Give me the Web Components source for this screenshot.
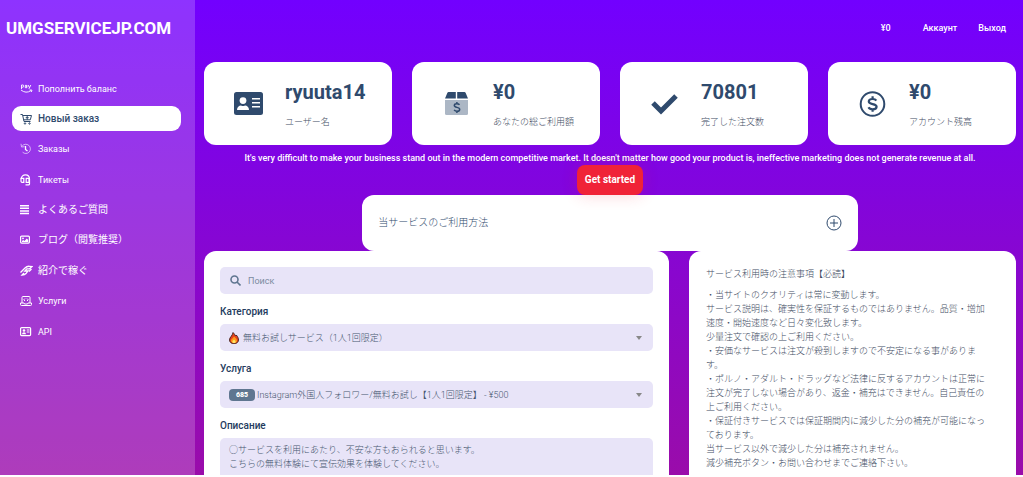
<!DOCTYPE html>
<html lang="ru">
<head>
<meta charset="utf-8">
<meta name="viewport" content="width=device-width, initial-scale=1">
<title>umgservicejp.com</title>
<style>
  body { margin: 0; background: #fff; color: #2f4a6d; font: 9px/14px Roboto, "Noto Sans CJK JP", sans-serif; overflow: hidden; }
</style>
</head>
<body>
<smm-app></smm-app>

<template id="t-app">
  <style>
    :host { display: flex; height: calc(100vh - 2px); overflow: hidden; background: linear-gradient(#7200ff, #9a0caa); }
    main { flex: 1; min-width: 0; padding: 0 7px 0 9px; }
    .stats { display: grid; grid-template-columns: repeat(4, 1fr); gap: 20px; }
    .promo { display: flex; flex-direction: column; align-items: center; padding-top: 6px; color: #fff; }
    .promo p { margin: 0; font-weight: 500; text-align: center; }
    .promo button { height: 30px; padding: 0 8px; border: 0; border-radius: 8px; background: #f02337; color: #fff; font: 700 10px/14px Roboto, sans-serif; box-shadow: 0 0 16px rgba(240, 35, 55, .2); }
    .columns { display: grid; grid-template-columns: 465fr 327fr; gap: 20px; align-items: start; }
  </style>
  <smm-sidebar></smm-sidebar>
  <main>
    <smm-topbar></smm-topbar>
    <section class="stats">
      <smm-stat value="ryuuta14" label="ユーザー名">
        <svg width="29" height="23" viewBox="0 0 29 23"><rect width="29" height="23" rx="2.5" fill="#2f4a6d"/><circle cx="9" cy="8.600" r="3.400" fill="#fff"/><path d="M3 18c0-3 2-4.500 4-4.500q2 1 4 0c2 0 4 1.500 4 4.500zM18 6h8v1.500h-8zM18 10h8v1.500h-8zM18 14h8v1.500h-8z" fill="#fff"/></svg>
      </smm-stat>
      <smm-stat value="¥0" label="あなたの総ご利用額">
        <svg width="29" height="23" viewBox="0 0 29 23"><path d="M3 8h23v13.500q0 1.500-1.500 1.500h-20q-1.500 0-1.500-1.500z" fill="#acb7c5"/><path d="M6.500 0H13.800v6.500H3L5.300 1q.4-1 1.200-1zM15.200 0h7.300q.8 0 1.200 1l2.300 5.500H15.200z" fill="#2f4a6d"/><path d="M17.500 12.800c-.6-.8-1.600-1-2.700-1-1.500 0-2.500.7-2.500 1.700 0 2.600 5.400 1.100 5.400 3.900 0 1.100-1.200 1.800-2.700 1.800-1.300 0-2.300-.5-2.900-1.300M14.900 10v1.700M14.900 19v2" fill="none" stroke="#2f4a6d" stroke-width="1.500"/></svg>
      </smm-stat>
      <smm-stat value="70801" label="完了した注文数">
        <svg width="29" height="23" viewBox="0 0 29 23"><path d="M3 11l8 8L26 4" fill="none" stroke="#2f4a6d" stroke-width="5"/></svg>
      </smm-stat>
      <smm-stat value="¥0" label="アカウント残高">
        <svg width="29" height="26" viewBox="0 0 29 26"><circle cx="14.500" cy="13" r="11.800" fill="none" stroke="#2f4a6d" stroke-width="2"/><path d="M18.300 9.600c-.7-1.100-2-1.600-3.700-1.600-2.200 0-3.800 1-3.800 2.500 0 3.700 7.800 1.400 7.800 5.300 0 1.500-1.700 2.500-3.900 2.500-2 0-3.500-.7-4.200-2M14.600 5.200V8M14.600 18v2.800" fill="none" stroke="#2f4a6d" stroke-width="2.200"/></svg>
      </smm-stat>
    </section>
    <section class="promo">
      <p>It's very difficult to make your business stand out in the modern competitive market. It doesn't matter how good your product is, ineffective marketing does not generate revenue at all.</p>
      <button type="button">Get started</button>
    </section>
    <smm-accordion>当サービスのご利用方法</smm-accordion>
    <section class="columns">
      <smm-order-form></smm-order-form>
      <smm-notice></smm-notice>
    </section>
  </main>
</template>

<template id="t-sidebar">
  <style>
    :host { display: block; flex: 0 0 195px; box-sizing: border-box; background: rgba(255, 255, 255, .2); padding: 16px 14px 0 12px; }
    .brand { display: block; margin: 0 -6px; color: #fff; font-size: 17px; line-height: 24px; font-weight: 700; text-decoration: none; white-space: nowrap; }
    nav { display: flex; flex-direction: column; justify-content: space-between; height: 268px; margin-top: 36px; }
  </style>
  <a class="brand" href="#">UMGSERVICEJP.COM</a>
  <nav>
    <smm-nav-item label="Пополнить баланс"><svg width="13" height="12" viewBox="0 0 13 12" fill="none" stroke="currentColor" stroke-width=".9"><path d="M1.500 6V2h1.300q1 0 1 1.100t-1 1.100H1.500M5 2.400h1.900v2.300H5.300V3.600h1.600M8.100 2l1.200 2.400M10.800 2L8.900 5.900M1 7q5 4 10 .6M9.600 7h2.200q.4 1-.6 2"/></svg></smm-nav-item>
    <smm-nav-item label="Новый заказ" active><svg width="13" height="12" viewBox="0 0 13 12" fill="none" stroke="currentColor"><path d="M.5 1.500H2.500L4 8.500H10.500M2.800 2.500h8.700l-1.200 4.300H3.700M7.200 2.500v4.300M5.700 4.700h3"/><circle cx="5" cy="10.500" r=".7"/><circle cx="9.500" cy="10.500" r=".7"/></svg></smm-nav-item>
    <smm-nav-item label="Заказы"><svg width="13" height="12" viewBox="0 0 13 12" fill="none" stroke="currentColor"><path d="M2.200 3a4.600 4.600 0 1 1 .4 6.200M1 .8L1.500 4l3-.3" opacity=".6"/><path d="M5.500 3v3.500l2 1.500" stroke-width="1.300"/></svg></smm-nav-item>
    <smm-nav-item label="Тикеты"><svg width="13" height="12" viewBox="0 0 13 12" fill="none" stroke="currentColor" stroke-width="1.200"><path d="M1.300 5C1.300-.5 9.500-.5 9.500 5V10Q9.300 10.800 8.500 10.800H5.500"/><path d="M1 4.300h2.800v4H2Q1 8.300 1 7zM6.200 4.300h2.800v4H6.200z"/></svg></smm-nav-item>
    <smm-nav-item lang="ja" label="よくあるご質問"><svg width="13" height="12" viewBox="0 0 13 12" fill="currentColor"><path d="M0 1h9v1.500H0zM0 3.600h9v1.500H0zM0 6.200h9v1.500H0zM0 8.800h9v1.500H0z"/></svg></smm-nav-item>
    <smm-nav-item lang="ja" label="ブログ（閲覧推奨）"><svg width="13" height="12" viewBox="0 0 13 12"><rect x=".6" y="2.100" width="8.800" height="7" rx="1" fill="none" stroke="currentColor" stroke-width="1.200"/><circle cx="3" cy="4.300" r=".9" fill="currentColor"/><path d="M2 8V6.900l1.200-1L4.500 6.900 6.800 4.500 8.200 5.900V8z" fill="currentColor"/></svg></smm-nav-item>
    <smm-nav-item lang="ja" label="紹介で稼ぐ"><svg width="13" height="12" viewBox="0 0 13 12" fill="none" stroke="currentColor" stroke-width="1.300"><path d="M.5 7.500L5 3q2-2 4.500-1.700L12 1.600 9.500 3.800H6.800L4.800 6H8L6.300 8.200q-1.600 1.800-4.300 1.800L4 8M9 6.500L11.500 4"/></svg></smm-nav-item>
    <smm-nav-item label="Услуги"><svg width="13" height="12" viewBox="0 0 13 12" fill="none" stroke="currentColor"><path d="M2 8V2.500Q2 1.500 3 1.500h6q1 0 1 1V8M.5 8h3.500l.5 1h3L8 8h3.500v1.500q0 1-1 1h-9q-1 0-1-1zM5 3.500L3.800 4.800 5 6M7 3.500l1.200 1.300L7 6"/></svg></smm-nav-item>
    <smm-nav-item label="API"><svg width="13" height="12" viewBox="0 0 13 12"><rect x=".6" y="1.600" width="10" height="8" rx="1" fill="none" stroke="currentColor" stroke-width="1.200"/><circle cx="4" cy="4.500" r="1.300" fill="currentColor"/><path d="M2 8.300Q2 6.200 4 6.200t2 2.100zM6.800 3.500h2.700v1H6.800zM6.800 5.500h2.700v1H6.800z" fill="currentColor"/></svg></smm-nav-item>
  </nav>
</template>

<template id="t-nav-item">
  <style>
    :host { display: block; }
    :host([lang="ja"]), :host([active]) { font-size: 10px; }
    a { display: flex; align-items: center; gap: 5px; height: 25px; padding: 0 8px; border-radius: 9px; color: #fff; font-weight: 400; text-decoration: none; white-space: nowrap; }
    :host([active]) a { background: #fff; color: #2f4a6d; font-weight: 500; }
    ::slotted(svg) { display: block; flex: none; }
  </style>
  <a href="#"><slot></slot><span></span></a>
</template>

<template id="t-topbar">
  <style>
    :host { display: flex; justify-content: flex-end; align-items: center; height: 55px; margin-bottom: 7px; padding-right: 10px; color: #fff; font-weight: 500; }
    span { margin-right: 32px; }
    nav { display: flex; gap: 21px; }
    a { color: inherit; text-decoration: none; }
  </style>
  <span>¥0</span>
  <nav><a href="#">Аккаунт</a><a href="#">Выход</a></nav>
</template>

<template id="t-stat">
  <style>
    :host { display: flex; gap: 22px; align-items: center; box-sizing: border-box; height: 83px; padding: 0 10px 0 30px; border-radius: 12px; background: #fff; }
    ::slotted(svg) { display: block; flex: none; }
    strong { display: block; font-size: 20px; line-height: 28px; font-weight: 700; }
    span { display: block; margin-top: 9px; font-weight: 300; color: #3f4d63; white-space: nowrap; }
    .text { padding-bottom: 1px; }
  </style>
  <slot></slot>
  <div class="text"><strong></strong><span></span></div>
</template>

<template id="t-accordion">
  <style>
    :host { display: block; width: 61%; margin: 0 auto; }
    button { display: flex; justify-content: space-between; align-items: center; width: 100%; height: 56px; padding: 0 16px; border: 0; border-radius: 12px; background: #fff; color: #2f4a6d; font: 300 10px/14px Roboto, "Noto Sans CJK JP", sans-serif; }
    svg { display: block; }
  </style>
  <button type="button" aria-expanded="false"><slot></slot>
    <svg width="16" height="16" viewBox="0 0 16 16" fill="none" stroke="#2f4a6d"><circle cx="8" cy="8" r="7"/><path d="M8 4v8M4 8h8"/></svg>
  </button>
</template>

<template id="t-order-form">
  <style>
    :host { display: block; padding: 16px; border-radius: 12px; background: #fff; }
    form { margin: 0; }
    .field { display: flex; align-items: center; height: 27px; padding: 0 11px 0 9px; border-radius: 5px; background: #e8e4f8; }
    label, .heading { display: block; margin: 11px 0 5px; font-size: 10px; font-weight: 500; color: #243b5e; }
    input, select { flex: 1; min-width: 0; height: 27px; margin: 0; padding: 0; border: 0; outline: 0; background: none; appearance: none; color: #46566f; font: 300 9px/14px Roboto, "Noto Sans CJK JP", sans-serif; }
    input { font-weight: 400; }
    input::placeholder { color: #7b8ba0; }
    svg { display: block; flex: none; }
    .fire { margin-right: 4px; }
    .lens { margin: 0 7px 0 1px; }
    .badge { width: 26px; margin-right: 2px; border-radius: 4px; background: #5f7690; color: #fff; font-size: 7px; line-height: 12px; font-weight: 900; text-align: center; }
    .description { min-height: 90px; padding: 5px 9px; border-radius: 5px; background: #e8e4f8; color: #46566f; font-weight: 300; }
  </style>
  <form>
    <div class="field">
      <svg class="lens" width="11" height="11" viewBox="0 0 11 11" fill="none" stroke="#5f7690" stroke-width="1.600"><circle cx="4.500" cy="4.500" r="3.500"/><path d="M7 7l3.500 3.500"/></svg>
      <input type="search" placeholder="Поиск" aria-label="Поиск">
    </div>
    <label for="category">Категория</label>
    <div class="field">
      <svg class="fire" width="10" height="12" viewBox="0 0 10 12"><path d="M4 .5C5.500 2 6 3 6.500 4l.8-1C9 5 9.500 6.500 9.500 8a4.500 3.800 0 0 1-9 0C.5 5 3.500 4 4 .5z" fill="#e5421c" stroke="#2c1410" stroke-width=".8"/><path d="M5 4.500C6.500 6 8 7 8 8.700 8 10.300 6.600 11 5 11S2 10.200 2 8.600C2 7 4 6.500 5 4.500z" fill="#ff9c1c"/><path d="M5 7.500c1 1 1.600 1.400 1.600 2.200S6 11 5 11s-1.600-.5-1.600-1.300S4.300 8.500 5 7.500z" fill="#ffe569"/></svg>
      <select id="category"><option>無料お試しサービス（1人1回限定）</option></select>
      <svg width="6" height="4" viewBox="0 0 6 4"><path d="M0 0h6L3 4z" fill="#888"/></svg>
    </div>
    <label for="service">Услуга</label>
    <div class="field">
      <span class="badge">685</span>
      <select id="service"><option>Instagram外国人フォロワー/無料お試し【1人1回限定】 - ¥500</option></select>
      <svg width="6" height="4" viewBox="0 0 6 4"><path d="M0 0h6L3 4z" fill="#888"/></svg>
    </div>
    <div class="heading" id="desc">Описание</div>
    <div class="description" role="group" aria-labelledby="desc">○サービスを利用にあたり、不安な方もおられると思います。<br>こちらの無料体験にて宣伝効果を体験してください。</div>
  </form>
</template>

<template id="t-notice">
  <style>
    :host { display: block; min-height: 210px; padding: 16px 17px; border-radius: 12px; background: #fff; color: #3f4d63; font-weight: 300; }
    p { margin: 0 0 7px; white-space: nowrap; }
  </style>
  <p>サービス利用時の注意事項【必読】</p>
  <p>・当サイトのクオリティは常に変動します。<br>サービス説明は、確実性を保証するものではありません。品質・増加<br>速度・開始速度など日々変化致します。<br>少量注文で確認の上ご利用ください。<br>・安価なサービスは注文が殺到しますので不安定になる事がありま<br>す。<br>・ポルノ・アダルト・ドラッグなど法律に反するアカウントは正常に<br>注文が完了しない場合があり、返金・補充はできません。自己責任の<br>上ご利用ください。<br>・保証付きサービスでは保証期間内に減少した分の補充が可能になっ<br>ております。<br>当サービス以外で減少した分は補充されません。<br>減少補充ボタン・お問い合わせまでご連絡下さい。</p>
</template>

<script>
  class Base extends HTMLElement {
    constructor() {
      super();
      const t = document.getElementById('t-' + this.localName.slice(4));
      this.attachShadow({ mode: 'open' }).append(t.content.cloneNode(true));
    }
  }
  class NavItem extends Base {
    connectedCallback() { this.shadowRoot.querySelector('span').textContent = this.getAttribute('label'); }
  }
  class Stat extends Base {
    connectedCallback() {
      this.shadowRoot.querySelector('strong').textContent = this.getAttribute('value');
      this.shadowRoot.querySelector('span').textContent = this.getAttribute('label');
    }
  }
  customElements.define('smm-nav-item', NavItem);
  customElements.define('smm-stat', Stat);
  for (const name of ['sidebar', 'topbar', 'accordion', 'order-form', 'notice', 'app'])
    customElements.define('smm-' + name, class extends Base {});
</script>
</body>
</html>
